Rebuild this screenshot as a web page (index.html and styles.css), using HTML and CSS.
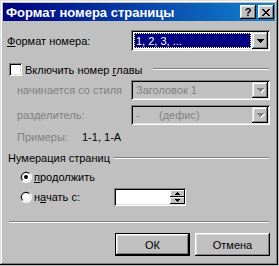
FILE: index.html
```html
<!DOCTYPE html>
<html>
<head>
<meta charset="utf-8">
<link rel="stylesheet" href="styles.css">
</head>
<body>
<!-- Dialog window -->
<div class="window">
  <div class="titlebar">
    <span class="title">Формат номера страницы</span>
    <div class="cap-btns">
      <div class="cap-btn help">?</div>
      <div class="cap-btn">
        <svg width="8" height="7" viewBox="0 0 8 7"><path d="M0 0h2v1H0zM6 0h2v1H6zM1 1h2v1H1zM5 1h2v1H5zM2 2h4v1H2zM3 3h2v1H3zM2 4h4v1H2zM1 5h2v1H1zM5 5h2v1H5zM0 6h2v1H0zM6 6h2v1H6z"/></svg>
      </div>
    </div>
  </div>

  <div class="body">
    <div class="row row-format">
      <span class="lbl"><u>Ф</u>ормат номера:</span>
      <div class="combo">
        <div class="combo-value selected">1, 2, 3, ...</div>
        <div class="drop-btn">
          <svg width="7" height="4" viewBox="0 0 7 4"><path d="M0 0h7v1H0zM1 1h5v1H1zM2 2h3v1H2zM3 3h1v1H3z"/></svg>
        </div>
      </div>
    </div>

    <!-- Chapter number group -->
    <div class="row row-check">
      <div class="checkbox"></div>
      <span class="check-lbl">Включить номер <u>г</u>лавы</span>
      <div class="etch"></div>
    </div>

    <div class="row row-field">
      <span class="lbl indent disabled">начинается со стиля</span>
      <div class="combo off">
        <div class="combo-value">Заголовок 1</div>
        <div class="drop-btn">
          <svg width="8" height="5" viewBox="0 0 8 5"><path fill="#fff" d="M1 1h7v1H1zM2 2h5v1H2zM3 3h3v1H3zM4 4h1v1H4z"/><path fill="#808080" d="M0 0h7v1H0zM1 1h5v1H1zM2 2h3v1H2zM3 3h1v1H3z"/></svg>
        </div>
      </div>
    </div>

    <div class="row row-field second">
      <span class="lbl indent disabled">разделитель:</span>
      <div class="combo off">
        <div class="combo-value"><span class="dash">-</span>(дефис)</div>
        <div class="drop-btn">
          <svg width="8" height="5" viewBox="0 0 8 5"><path fill="#fff" d="M1 1h7v1H1zM2 2h5v1H2zM3 3h3v1H3zM4 4h1v1H4z"/><path fill="#808080" d="M0 0h7v1H0zM1 1h5v1H1zM2 2h3v1H2zM3 3h1v1H3z"/></svg>
        </div>
      </div>
    </div>

    <div class="row row-sample">
      <span class="lbl indent disabled sample-lbl">Примеры:</span>
      <span>1-1, 1-А</span>
    </div>

    <!-- Page numbering group -->
    <div class="row row-group">
      <span class="group-lbl">Нумерация страниц</span>
      <div class="etch"></div>
    </div>

    <div class="row row-radio">
      <svg class="radio" width="12" height="12" viewBox="0 0 12 12">
        <circle cx="6" cy="6" r="6" fill="#fff"/>
        <path d="M1.76 10.24A6 6 0 0 1 10.24 1.76Z" fill="#808080"/>
        <circle cx="6" cy="6" r="5" fill="#dfdfdf"/>
        <path d="M2.46 9.54A5 5 0 0 1 9.54 2.46Z" fill="#000"/>
        <circle cx="6" cy="6" r="4" fill="#fff"/>
        <circle cx="6" cy="6" r="2" fill="#000"/>
      </svg>
      <span class="radio-lbl"><u>п</u>родолжить</span>
    </div>

    <div class="row row-radio start">
      <svg class="radio" width="12" height="12" viewBox="0 0 12 12">
        <circle cx="6" cy="6" r="6" fill="#fff"/>
        <path d="M1.76 10.24A6 6 0 0 1 10.24 1.76Z" fill="#808080"/>
        <circle cx="6" cy="6" r="5" fill="#dfdfdf"/>
        <path d="M2.46 9.54A5 5 0 0 1 9.54 2.46Z" fill="#000"/>
        <circle cx="6" cy="6" r="4" fill="#fff"/>
      </svg>
      <span class="radio-lbl">н<u>а</u>чать с:</span>
      <div class="spin">
        <div class="spin-text"></div>
        <div class="spin-btns">
          <div class="spin-btn"><svg width="5" height="3" viewBox="0 0 5 3"><path d="M2 0h1v1H2zM1 1h3v1H1zM0 2h5v1H0z"/></svg></div>
          <div class="spin-btn"><svg width="5" height="3" viewBox="0 0 5 3"><path d="M0 0h5v1H0zM1 1h3v1H1zM2 2h1v1H2z"/></svg></div>
        </div>
      </div>
    </div>

    <div class="separator"></div>

    <div class="row buttons">
      <div class="btn default">ОК</div>
      <div class="btn">Отмена</div>
    </div>
  </div>
</div>
</body>
</html>
```

FILE: styles.css
```css
/* Classic gray dialog */
body {
  margin: 0;
  background: #c0c0c0;
  font-family: "Liberation Sans", Arial, sans-serif;
  font-size: 11px;
  color: #000;
}

.window {
  width: 278px;
  height: 265px;
  box-sizing: border-box;
  padding: 3px;
  background: #c0c0c0;
  box-shadow: inset -1px -1px #000, inset 1px 1px #dfdfdf, inset -2px -2px #808080, inset 2px 2px #fff;
  display: flex;
  flex-direction: column;
}

/* Title bar */
.titlebar {
  height: 18px;
  display: flex;
  align-items: center;
  padding: 0 1px 0 3px;
  background: linear-gradient(to right, #000080, #1084d0);
  color: #fff;
}

.title {
  flex: 1;
  font-weight: bold;
  font-size: 13px;
}

.cap-btns {
  display: flex;
  gap: 2px;
}

.cap-btn {
  width: 16px;
  height: 14px;
  box-sizing: border-box;
  background: #c0c0c0;
  box-shadow: inset -1px -1px #000, inset 1px 1px #fff, inset -2px -2px #808080, inset 2px 2px #dfdfdf;
  display: flex;
  align-items: center;
  justify-content: center;
  color: #000;
}

.cap-btn.help {
  font-weight: bold;
  font-size: 11px;
}

/* Dialog contents */
.body {
  flex: 1;
  display: flex;
  flex-direction: column;
  padding: 0 5px 0 4px;
}

.row {
  display: flex;
  align-items: center;
}

u {
  text-underline-offset: 1px;
}

.row-format {
  margin-top: 9px;
  height: 21px;
}

.indent {
  margin-left: 10px;
}

.disabled {
  color: #808080;
}

/* Combo boxes */
.combo {
  width: 139px;
  height: 100%;
  margin-left: auto;
  box-sizing: border-box;
  padding: 2px;
  background: #fff;
  box-shadow: inset 1px 1px #808080, inset -1px -1px #fff, inset 2px 2px #000, inset -2px -2px #dfdfdf;
  display: flex;
}

.combo.off {
  background: #c0c0c0;
  color: #808080;
}

.combo-value {
  flex: 1;
  display: flex;
  align-items: center;
  padding-left: 2px;
  margin: 1px;
}

.combo-value.selected {
  background: #000080;
  color: #fff;
  outline: 1px dotted #ffff80;
  outline-offset: -1px;
}

.dash {
  width: 23px;
}

.drop-btn {
  width: 16px;
  box-sizing: border-box;
  background: #c0c0c0;
  box-shadow: inset -1px -1px #000, inset 1px 1px #dfdfdf, inset -2px -2px #808080, inset 2px 2px #fff;
  display: flex;
  align-items: center;
  justify-content: center;
}

.off .drop-btn svg {
  margin: 1px 0 0 1px;
}

/* Checkbox group header */
.row-check {
  margin-top: 12px;
  height: 13px;
}

.checkbox {
  width: 13px;
  height: 13px;
  margin-left: 2px;
  box-sizing: border-box;
  background: #fff;
  box-shadow: inset 1px 1px #808080, inset -1px -1px #fff, inset 2px 2px #000, inset -2px -2px #dfdfdf;
}

.check-lbl {
  margin-left: 3px;
}

.etch {
  flex: 1;
  height: 0;
  margin: 0 1px 0 10px;
  border-top: 1px solid #808080;
  border-bottom: 1px solid #fff;
}

.row-check .etch {
  align-self: flex-start;
  margin-top: 5px;
}

.row-field {
  margin-top: 4px;
  height: 20px;
}

.row-field.second {
  margin-top: 5px;
}

.row-sample {
  margin-top: 5px;
  height: 14px;
}

.sample-lbl {
  width: 65px;
}

/* Page numbering group */
.row-group {
  margin-top: 7px;
  height: 14px;
}

.group-lbl {
  margin-left: 1px;
}

.row-group .etch {
  margin-left: 4px;
}

.row-radio {
  margin-top: 5px;
  height: 14px;
}

.row-radio.start {
  margin-top: 4px;
  height: 18px;
}

.radio {
  margin-left: 13px;
  flex: none;
}

.radio-lbl {
  margin-left: 2px;
  width: 80px;
}

/* Spin edit */
.spin {
  width: 72px;
  height: 18px;
  box-sizing: border-box;
  padding: 2px 1px 2px 2px;
  background: #fff;
  box-shadow: inset 1px 1px #808080, inset -1px -1px #fff, inset 2px 2px #000, inset -2px -2px #dfdfdf;
  display: flex;
}

.spin-text {
  flex: 1;
}

.spin-btns {
  width: 15px;
  display: flex;
  flex-direction: column;
}

.spin-btn {
  flex: 1;
  background: #c0c0c0;
  box-shadow: inset -1px -1px #000, inset 1px 1px #fff;
  display: flex;
  align-items: center;
  justify-content: center;
}

.separator {
  margin: 15px 1px 0 2px;
  border-top: 1px solid #808080;
  border-bottom: 1px solid #fff;
}

/* OK / Cancel */
.buttons {
  margin-top: 10px;
  justify-content: flex-end;
  gap: 5px;
}

.btn {
  width: 75px;
  height: 23px;
  box-sizing: border-box;
  display: flex;
  align-items: center;
  justify-content: center;
  background: #c0c0c0;
  box-shadow: inset -1px -1px #000, inset 1px 1px #fff, inset -2px -2px #808080, inset 2px 2px #dfdfdf;
}

.btn.default {
  border: 1px solid #000;
}
```
